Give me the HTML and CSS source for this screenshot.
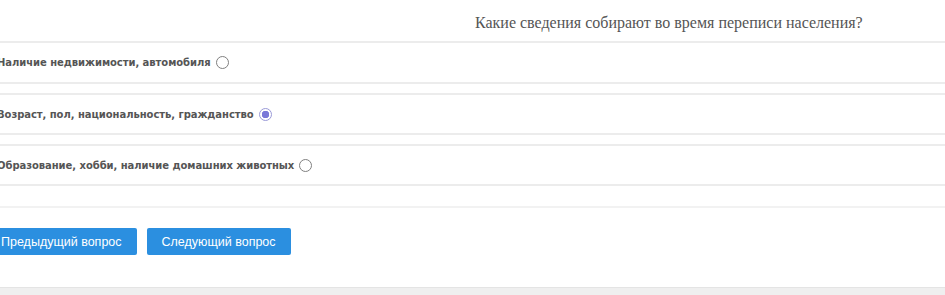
FILE: index.html
```html
<!DOCTYPE html>
<html lang="ru">

<head>
  <meta charset="utf-8">
  <title>Перепись</title>
  <link rel="stylesheet" href="styles.css">
</head>

<body>
  <div class="quiz">
    <div class="q-title">Какие сведения собирают во время переписи населения?</div>
    <ul class="answers">
      <li class="ans">
        <label>Наличие недвижимости, автомобиля <input type="radio" name="q1"></label>
      </li>
      <li class="ans">
        <label>Возраст, пол, национальность, гражданство <input type="radio" name="q1" checked></label>
      </li>
      <li class="ans">
        <label>Образование, хобби, наличие домашних животных <input type="radio" name="q1"></label>
      </li>
    </ul>
    <div class="sep"></div>
    <div class="btns">
      <button class="btn prev">Предыдущий вопрос</button>
      <button class="btn">Следующий вопрос</button>
    </div>
  </div>
  <div class="foot"></div>
</body>

</html>
```

FILE: styles.css
```css
body {
  margin: 0;
  background: #fff;
  overflow: hidden;
}

.quiz {
  margin-left: -3px;
}

.q-title {
  height: 41px;
  line-height: 45px;
  padding-left: 478px;
  font-family: "Liberation Serif", serif;
  font-size: 16px;
  color: #555;
  border-bottom: 2px solid #ececec;
}

.answers {
  list-style: none;
  margin: 0;
  padding: 0;
}

.ans {
  height: 38px;
  display: flex;
  align-items: center;
  border-bottom: 2px solid #ececec;
  margin-bottom: 9px;
  border-top: 2px solid #ececec;
}

.ans:first-child {
  height: 39px;
  border-top: 0;
}

.ans label {
  display: flex;
  align-items: center;
  font-family: "DejaVu Sans", sans-serif;
  font-weight: bold;
  font-size: 10px;
  letter-spacing: -0.05px;
  color: #555;
}

.ans input {
  -webkit-appearance: none;
  appearance: none;
  width: 13px;
  height: 13px;
  margin: 0 0 0 5px;
  border: 1px solid #808080;
  border-radius: 50%;
  background: #fff;
}

.ans input:checked {
  border-color: #9a9ad8;
  background: radial-gradient(circle, #7a78d8 0 3.5px, #fff 4px);
}

.sep {
  margin-top: 20px;
  border-top: 2px solid #f2f2f2;
}

.btns {
  display: flex;
  gap: 10px;
  margin-top: 20px;
  height: 59px;
}

.btn {
  height: 27px;
  padding: 0 15px;
  border: 0;
  border-radius: 2px;
  background: #2b8fe0;
  color: #fff;
  font-family: "Liberation Sans", sans-serif;
  font-size: 12.5px;
}

.btn.prev {
  margin-left: -11px;
}

.foot {
  height: 20px;
  background: #efefef;
  border-top: 1px solid #e4e4e4;
}
```
